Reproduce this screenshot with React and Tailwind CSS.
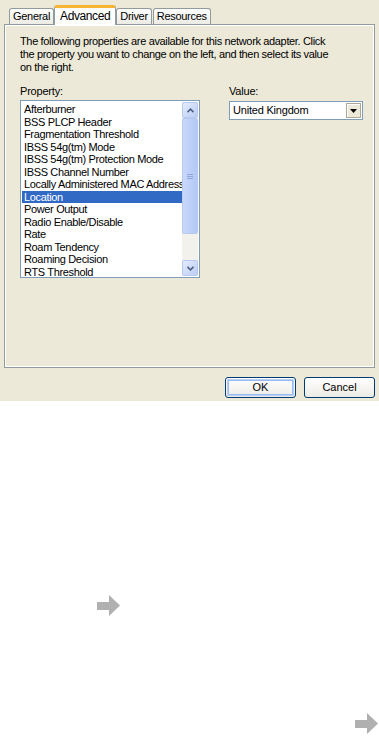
import React from 'react';

const FONT = { fontFamily: '"Liberation Sans", Arial, sans-serif' };

const PROPERTIES = [
    'Afterburner',
    'BSS PLCP Header',
    'Fragmentation Threshold',
    'IBSS 54g(tm) Mode',
    'IBSS 54g(tm) Protection Mode',
    'IBSS Channel Number',
    'Locally Administered MAC Address',
    'Location',
    'Power Output',
    'Radio Enable/Disable',
    'Rate',
    'Roam Tendency',
    'Roaming Decision',
    'RTS Threshold',
];

const TABS = ['General', 'Advanced', 'Driver', 'Resources'];

function Chevron({ down }) {
    return (
        <svg width="7" height="5" viewBox="0 0 7 5">
            <path
                d={down ? 'M0.5 0.8 L3.5 3.8 L6.5 0.8' : 'M0.5 4.2 L3.5 1.2 L6.5 4.2'}
                fill="none"
                stroke="#4D6185"
                strokeWidth="1.6"
            />
        </svg>
    );
}

function ScrollButton({ down }) {
    return (
        <div className="h-[16px] w-[16px] shrink-0 rounded-[2px] border border-[#B6CAF0] bg-gradient-to-br from-[#E3EBFD] to-[#BCCDF5] flex items-center justify-center">
            <Chevron down={down} />
        </div>
    );
}

function Tab({ label, active }) {
    if (active) {
        return (
            <div className="relative z-10 -mb-px -mx-px h-[20px] border-x border-[#919B9C] bg-white px-[5px] pt-[1px] rounded-t-[3px] border-t-[3px] border-t-[#F7B435] text-[12px] leading-[14px] tracking-[-0.4px] text-black">
                {label}
            </div>
        );
    }
    return (
        <div className="h-[16px] border border-b-0 border-[#919B9C] rounded-t-[3px] bg-gradient-to-b from-white to-[#ECEBE5] px-[3px] pt-[1px] text-[11px] leading-[13px] tracking-[-0.3px] text-black">
            {label}
        </div>
    );
}

function Button({ children, focused }) {
    return (
        <div className="h-[21px] w-[71px] rounded-[3px] border border-[#003C74] bg-gradient-to-b from-white to-[#ECEBE6] p-px">
            <div className={`h-full w-full rounded-[2px] flex items-center justify-center text-[11px] text-black ${focused ? 'shadow-[inset_0_0_0_1px_#B8D0F8,inset_0_0_0_2px_#9CBBF0]' : ''}`}>
                {children}
            </div>
        </div>
    );
}

function Arrow() {
    return (
        <svg width="24" height="21" viewBox="0 0 24 21" className="opacity-70">
            <rect x="0" y="7" width="13" height="8" fill="#8F8F8F" />
            <path d="M12 0 L23 10.5 L12 21 Z" fill="#8F8F8F" />
        </svg>
    );
}

export default function App() {
    return (
        <div className="w-[379px] h-[736px] bg-white overflow-hidden" style={FONT}>
            <div className="bg-[#ECE9D8] pb-[3px]">
                <div className="flex items-end pl-[9px] pt-[5px] gap-px h-[24px]">
                    {TABS.map((t) => (
                        <Tab key={t} label={t} active={t === 'Advanced'} />
                    ))}
                </div>
                <div className="mx-[4px] h-[344px] border border-[#919B9C] shadow-[inset_1px_1px_0_#FFFFFF,inset_-1px_-1px_0_#FFFFFF] px-[15px] pt-[10px]">
                    <p className="w-[320px] text-[11px] leading-[13px] text-black tracking-[-0.35px]">
                        The following properties are available for this network adapter. Click the property you want to change on the left, and then select its value on the right.
                    </p>
                    <div className="mt-[11px] flex">
                        <div className="w-[180px]">
                            <div className="text-[11px] leading-[13px] mb-[2px] tracking-[-0.2px]">Property:</div>
                            <div className="h-[178px] border border-[#7F9DB9] bg-white flex p-px overflow-hidden">
                                <div className="flex-1 min-w-0 pt-[1px]">
                                    {PROPERTIES.map((p) => (
                                        <div
                                            key={p}
                                            className={`h-[12.5px] leading-[12.5px] px-[2px] text-[11px] whitespace-nowrap tracking-[-0.35px] ${p === 'Location' ? 'bg-[#316AC5] text-white' : 'text-black'}`}
                                        >
                                            {p}
                                        </div>
                                    ))}
                                </div>
                                <div className="w-[16px] shrink-0 flex flex-col bg-[#F3F1EC]">
                                    <ScrollButton />
                                    <div className="h-[116px] shrink-0 rounded-[2px] border border-[#B6CAF0] bg-gradient-to-r from-[#C9D8FC] to-[#B3C8F6] flex items-center justify-center">
                                        <div className="flex flex-col gap-px">
                                            <div className="h-px w-[6px] bg-[#8DA7DB]" />
                                            <div className="h-px w-[6px] bg-[#8DA7DB]" />
                                            <div className="h-px w-[6px] bg-[#8DA7DB]" />
                                        </div>
                                    </div>
                                    <div className="flex-1" />
                                    <ScrollButton down />
                                </div>
                            </div>
                        </div>
                        <div className="ml-[29px]">
                            <div className="text-[11px] leading-[13px] mb-[3px] tracking-[-0.2px]">Value:</div>
                            <div className="h-[19px] w-[134px] border border-[#7F9DB9] bg-white flex items-center pl-[3px] pr-px">
                                <div className="flex-1 text-[11px] leading-[13px] tracking-[-0.2px]">United Kingdom</div>
                                <div className="h-[15px] w-[15px] border border-[#ACA899] shadow-[inset_1px_1px_0_#FFFFFF] bg-[#ECE9D8] flex items-center justify-center">
                                    <svg width="7" height="4" viewBox="0 0 7 4">
                                        <path d="M0 0 H7 L3.5 4 Z" fill="#000" />
                                    </svg>
                                </div>
                            </div>
                        </div>
                    </div>
                </div>
                <div className="flex justify-end gap-[8px] pr-[4px] pt-[9px]">
                    <Button focused>OK</Button>
                    <Button>Cancel</Button>
                </div>
            </div>
            <div className="pl-[97px] pt-[194px]">
                <Arrow />
            </div>
            <div className="flex justify-end pt-[97px] pr-0">
                <Arrow />
            </div>
        </div>
    );
}
